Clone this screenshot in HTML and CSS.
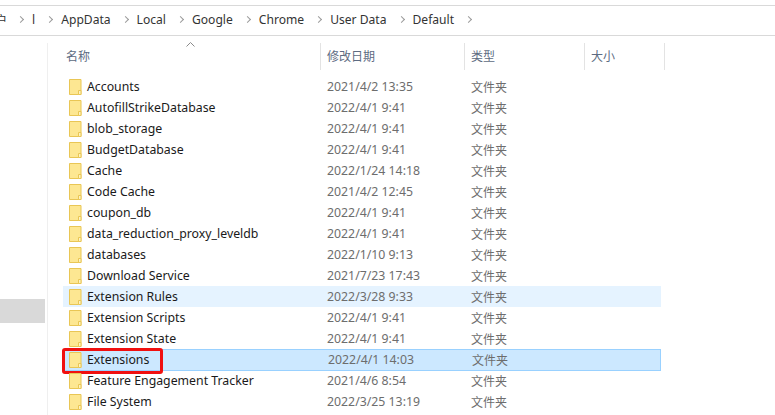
FILE: index.html
```html
<!DOCTYPE html>
<html lang="zh-CN">

<head>
  <meta charset="UTF-8">
  <meta name="viewport" content="width=device-width, initial-scale=1.0">
  <title>Default</title>
  <link rel="stylesheet" href="styles.css">
</head>

<body>
  <svg class="defs" width="0" height="0">
    <symbol id="folder" viewBox="0 0 13 16">
      <path d="M.5.5h11.5v15H.5z" fill="#fde792" stroke="#e9c655" />
      <path d="M9.5 15.5v-4h2.5v4z" fill="#fdf3c4" stroke="#e9c655" />
    </symbol>
  </svg>

  <div class="address-bar">
    <span class="crumb cut">户</span>
    <span class="crumb">l</span>
    <span class="crumb">AppData</span>
    <span class="crumb">Local</span>
    <span class="crumb">Google</span>
    <span class="crumb">Chrome</span>
    <span class="crumb">User Data</span>
    <span class="crumb">Default</span>
  </div>

  <div class="explorer">
    <div class="nav">
      <div class="nav-selected"></div>
    </div>
    <div class="files">
      <div class="file-header">
        <div class="col col-name">名称<span class="sort-arrow"><svg width="9" height="5" viewBox="0 0 9 5"><path d="M.5 4.5l4-4 4 4" fill="none" stroke="#8a8a8a" /></svg></span></div>
        <div class="col col-date">修改日期</div>
        <div class="col col-type">类型</div>
        <div class="col col-size">大小</div>
      </div>

      <div class="file-row">
        <div class="cell-name"><svg class="folder-icon"><use href="#folder" /></svg>Accounts</div>
        <div class="cell-date">2021/4/2 13:35</div>
        <div class="cell-type">文件夹</div>
      </div>
      <div class="file-row">
        <div class="cell-name"><svg class="folder-icon"><use href="#folder" /></svg>AutofillStrikeDatabase</div>
        <div class="cell-date">2022/4/1 9:41</div>
        <div class="cell-type">文件夹</div>
      </div>
      <div class="file-row">
        <div class="cell-name"><svg class="folder-icon"><use href="#folder" /></svg>blob_storage</div>
        <div class="cell-date">2022/4/1 9:41</div>
        <div class="cell-type">文件夹</div>
      </div>
      <div class="file-row">
        <div class="cell-name"><svg class="folder-icon"><use href="#folder" /></svg>BudgetDatabase</div>
        <div class="cell-date">2022/4/1 9:41</div>
        <div class="cell-type">文件夹</div>
      </div>
      <div class="file-row">
        <div class="cell-name"><svg class="folder-icon"><use href="#folder" /></svg>Cache</div>
        <div class="cell-date">2022/1/24 14:18</div>
        <div class="cell-type">文件夹</div>
      </div>
      <div class="file-row">
        <div class="cell-name"><svg class="folder-icon"><use href="#folder" /></svg>Code Cache</div>
        <div class="cell-date">2021/4/2 12:45</div>
        <div class="cell-type">文件夹</div>
      </div>
      <div class="file-row">
        <div class="cell-name"><svg class="folder-icon"><use href="#folder" /></svg>coupon_db</div>
        <div class="cell-date">2022/4/1 9:41</div>
        <div class="cell-type">文件夹</div>
      </div>
      <div class="file-row">
        <div class="cell-name"><svg class="folder-icon"><use href="#folder" /></svg>data_reduction_proxy_leveldb</div>
        <div class="cell-date">2022/4/1 9:41</div>
        <div class="cell-type">文件夹</div>
      </div>
      <div class="file-row">
        <div class="cell-name"><svg class="folder-icon"><use href="#folder" /></svg>databases</div>
        <div class="cell-date">2022/1/10 9:13</div>
        <div class="cell-type">文件夹</div>
      </div>
      <div class="file-row">
        <div class="cell-name"><svg class="folder-icon"><use href="#folder" /></svg>Download Service</div>
        <div class="cell-date">2021/7/23 17:43</div>
        <div class="cell-type">文件夹</div>
      </div>
      <div class="file-row hovered">
        <div class="cell-name"><svg class="folder-icon"><use href="#folder" /></svg>Extension Rules</div>
        <div class="cell-date">2022/3/28 9:33</div>
        <div class="cell-type">文件夹</div>
      </div>
      <div class="file-row">
        <div class="cell-name"><svg class="folder-icon"><use href="#folder" /></svg>Extension Scripts</div>
        <div class="cell-date">2022/4/1 9:41</div>
        <div class="cell-type">文件夹</div>
      </div>
      <div class="file-row">
        <div class="cell-name"><svg class="folder-icon"><use href="#folder" /></svg>Extension State</div>
        <div class="cell-date">2022/4/1 9:41</div>
        <div class="cell-type">文件夹</div>
      </div>
      <div class="file-row selected">
        <div class="cell-name"><svg class="folder-icon"><use href="#folder" /></svg>Extensions</div>
        <div class="cell-date">2022/4/1 14:03</div>
        <div class="cell-type">文件夹</div>
        <div class="red-mark"></div>
      </div>
      <div class="file-row">
        <div class="cell-name"><svg class="folder-icon"><use href="#folder" /></svg>Feature Engagement Tracker</div>
        <div class="cell-date">2021/4/6 8:54</div>
        <div class="cell-type">文件夹</div>
      </div>
      <div class="file-row">
        <div class="cell-name"><svg class="folder-icon"><use href="#folder" /></svg>File System</div>
        <div class="cell-date">2022/3/25 13:19</div>
        <div class="cell-type">文件夹</div>
      </div>
      <div class="file-row">
        <div class="cell-name"><svg class="folder-icon"><use href="#folder" /></svg></div>
      </div>
    </div>
  </div>
</body>

</html>
```

FILE: styles.css
```css
* {
  margin: 0;
  padding: 0;
  box-sizing: border-box;
}

html,
body {
  height: 415px;
  overflow: hidden;
}

body {
  background-color: #ffffff;
  color: #1a1a1a;
  font-family: "Noto Sans", "Noto Sans CJK SC", sans-serif;
  font-size: 12px;
}

.defs {
  position: absolute;
}

.address-bar {
  height: 31px;
  margin-top: 5px;
  padding-bottom: 2px;
  border-top: 1px solid #d9d9d9;
  border-bottom: 1px solid #d9d9d9;
  display: flex;
  align-items: center;
  overflow: hidden;
  font-size: 12.1px;
}

.crumb {
  display: flex;
  align-items: center;
  margin-left: 9px;
  color: #333333;
}

.crumb::after {
  content: "";
  width: 4px;
  height: 4px;
  margin-left: 12px;
  border-top: 1px solid #9a9a9a;
  border-right: 1px solid #9a9a9a;
  transform: rotate(45deg);
}

.crumb.cut {
  margin-left: -5px;
}

.crumb.cut::after {
  margin-left: 11px;
}

.explorer {
  display: flex;
}

.nav {
  width: 48px;
  height: 379px;
  border-right: 1px solid #efefef;
  margin-top: 7px;
}

.nav-selected {
  width: 45px;
  height: 24px;
  margin-top: 256px;
  background-color: #d9d9d9;
}

.files {
  padding-left: 15px;
  width: 640px;
}

.file-header {
  height: 27px;
  margin-top: 7px;
  margin-bottom: 6px;
  display: flex;
  color: #5d6b82;
}

.col {
  flex-shrink: 0;
  height: 27px;
  line-height: 27px;
  padding-left: 6px;
  border-right: 1px solid #e3e3e3;
  position: relative;
}

.col-name {
  width: 258px;
  padding-left: 3px;
}

.col-date {
  width: 144px;
}

.col-type {
  width: 120px;
}

.col-size {
  width: 80px;
}

.sort-arrow {
  position: absolute;
  left: 123px;
  top: -1px;
  line-height: 5px;
}

.sort-arrow svg {
  display: block;
}

.file-row {
  position: relative;
  width: 598px;
  height: 21px;
  display: flex;
  align-items: center;
}

.file-row.hovered {
  background-color: #e5f3ff;
}

.file-row.selected {
  height: 22px;
  margin-bottom: -1px;
  padding-bottom: 1px;
  background-color: #cce8ff;
  border: 1px solid #99d1ff;
}

.cell-name {
  width: 258px;
  display: flex;
  align-items: center;
  padding-left: 6px;
  font-size: 12.3px;
}

.selected .cell-name {
  padding-left: 5px;
}

.folder-icon {
  width: 13px;
  height: 16px;
  margin-right: 5px;
  flex-shrink: 0;
}

.cell-date {
  width: 144px;
  padding-left: 6px;
  color: #6d6d6d;
  font-size: 12.3px;
}

.cell-type {
  width: 120px;
  padding-left: 6px;
  color: #6d6d6d;
}

.red-mark {
  position: absolute;
  left: -2px;
  top: -2px;
  width: 101px;
  height: 26px;
  border: 3px solid #f01010;
  border-radius: 3px;
}
```
